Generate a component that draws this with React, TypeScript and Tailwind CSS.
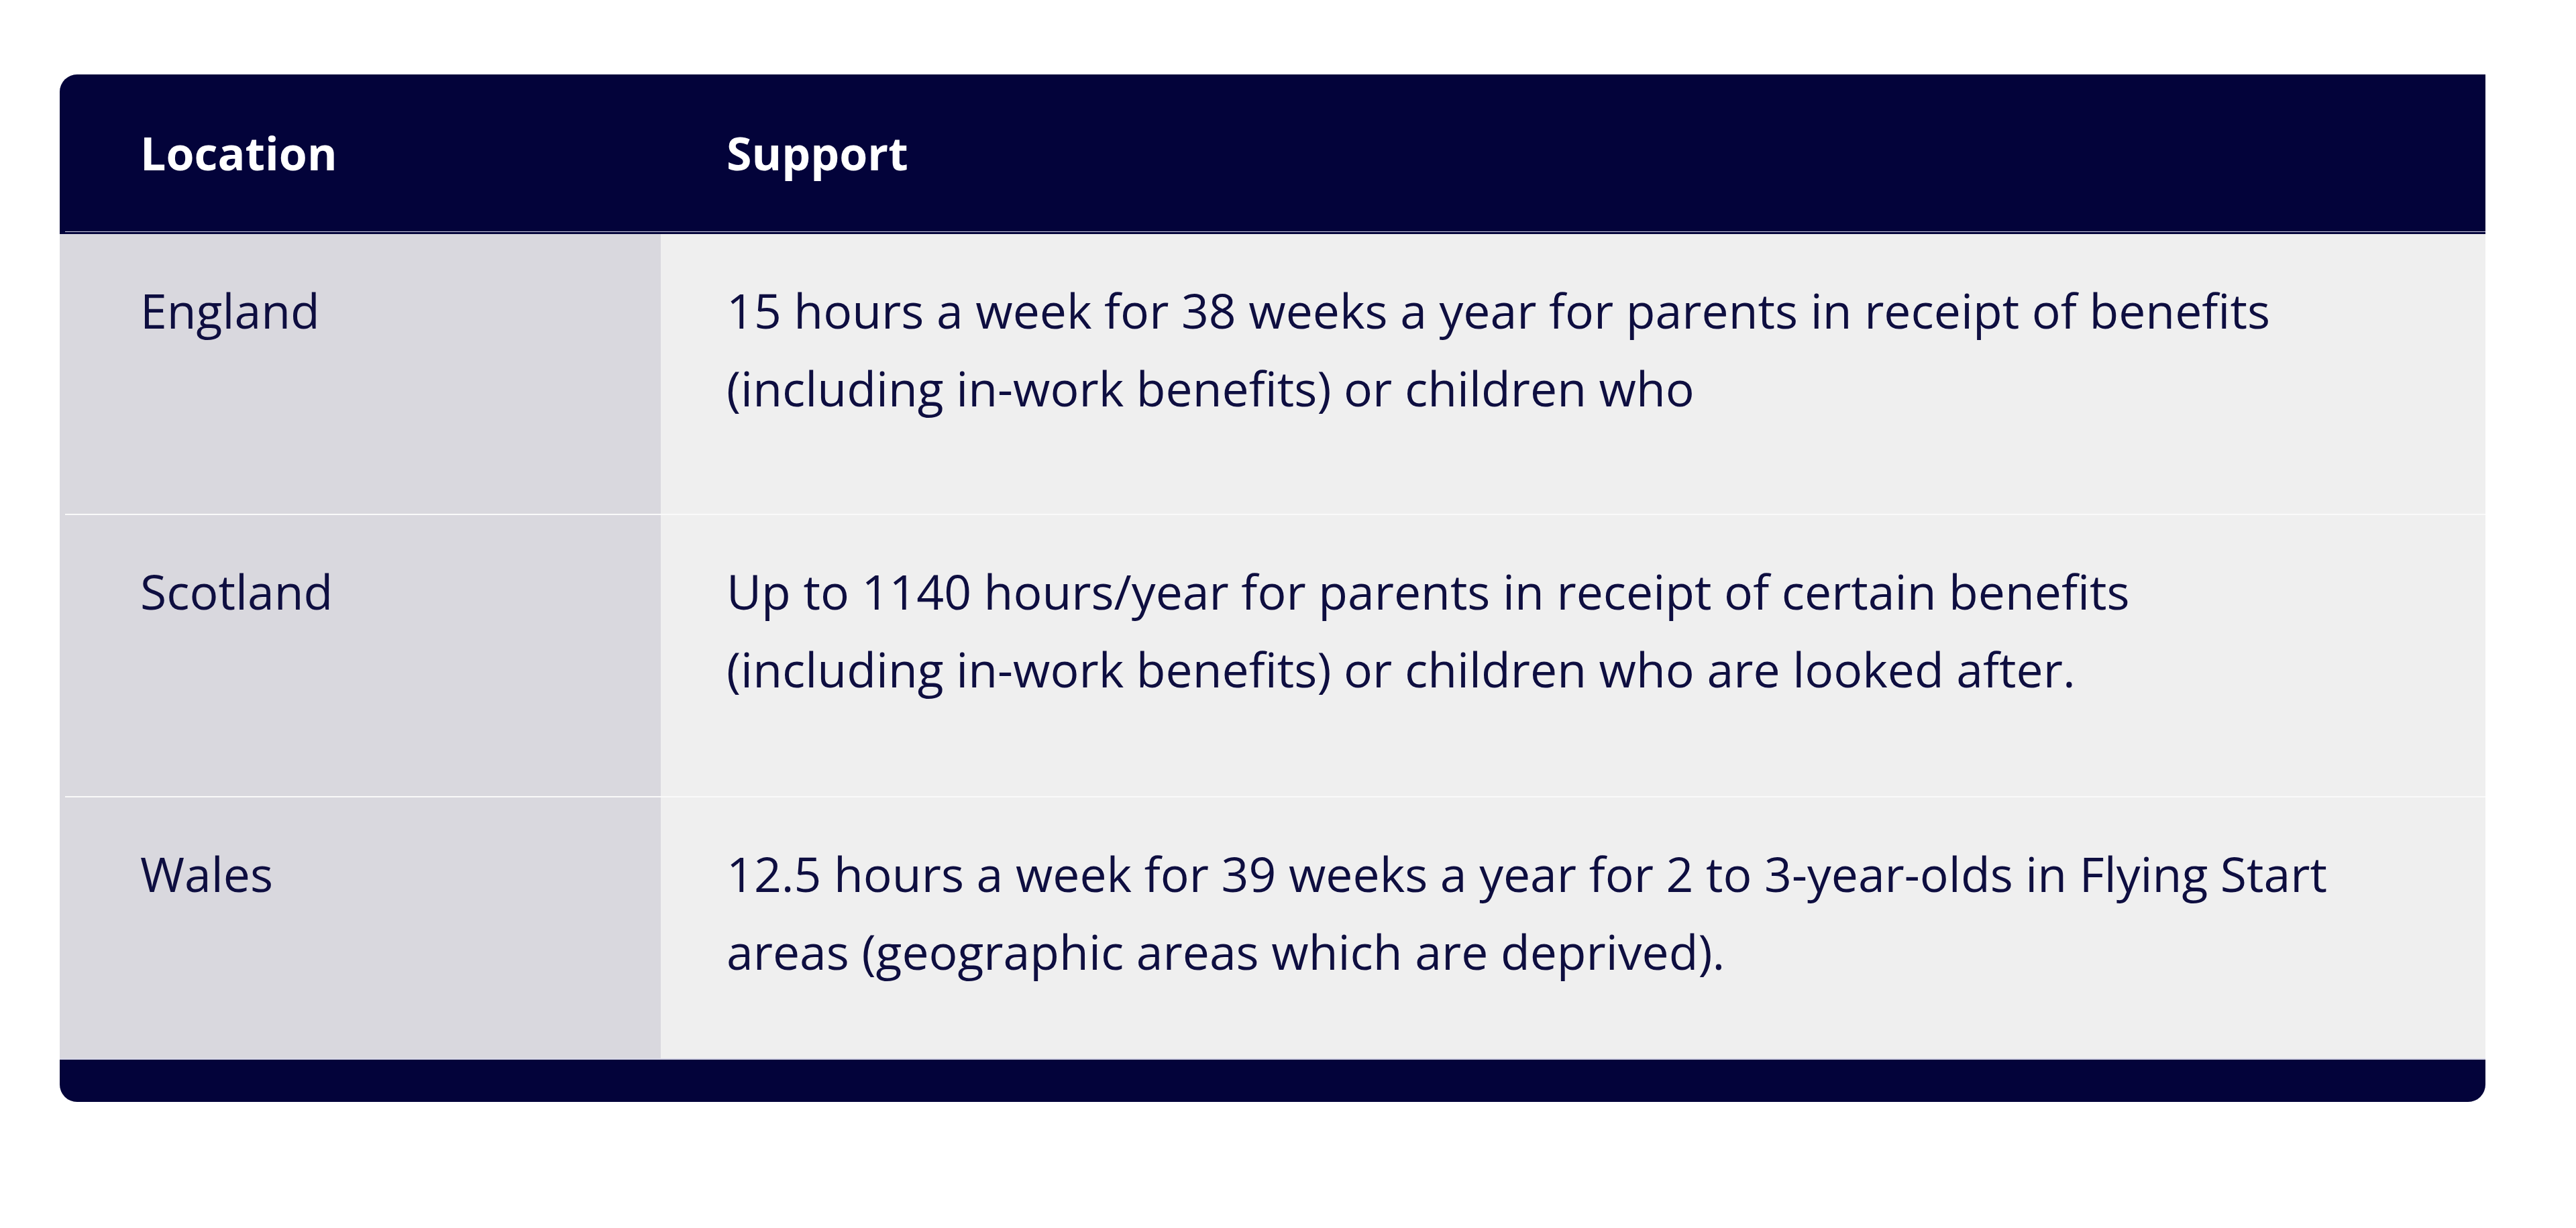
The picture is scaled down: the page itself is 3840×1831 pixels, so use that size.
const rows = [
  {
    location: "England",
    support:
      "15 hours a week for 38 weeks a year for parents in receipt of benefits (including in-work benefits) or children who",
    pad: "pb-[129px]",
  },
  {
    location: "Scotland",
    support:
      "Up to 1140 hours/year for parents in receipt of certain benefits (including in-work benefits) or children who are looked after.",
    pad: "pb-[131px]",
  },
  {
    location: "Wales",
    support:
      "12.5 hours a week for 39 weeks a year for 2 to 3-year-olds in Flying Start areas (geographic areas which are deprived).",
    pad: "pb-[101px]",
  },
];

export default function App() {
  return (
    <main
      className="min-h-screen bg-white pt-[111px] pl-[89px]"
      style={{ fontFamily: '"Open Sans", "Noto Sans", sans-serif' }}
    >
      <div className="w-[3616px] overflow-hidden rounded-tl-[26px] rounded-b-[26px] bg-[#d9d8de]">
        <div className="flex h-[234px] items-center bg-[#03033a] text-[68px] font-bold text-white">
          <div className="w-[896px] pl-[120px]">Location</div>
          <div className="pl-[98px]">Support</div>
        </div>
        <div className="bg-[#03033a] pb-[3px]">
          <div className="ml-2 h-px bg-[#d4d4e4]" />
        </div>

        {rows.map((row, i) => (
          <div key={row.location}>
            {i > 0 && <div className="ml-2 h-0.5 bg-[#fafafa]" />}
            <div className="flex text-[71.5px] leading-[116px] text-[#0e0e40]">
              <div className={`w-[896px] shrink-0 bg-[#d9d8de] pl-[120px] pt-[56px] ${row.pad}`}>
                {row.location}
              </div>
              <div className={`flex-1 bg-[#efefef] pl-[98px] pt-[56px] ${row.pad}`}>
                <p className="max-w-[2410px]">{row.support}</p>
              </div>
            </div>
          </div>
        ))}

        <div className="h-0.5 bg-[#d8d8e8]" />
        <div className="h-[63px] bg-[#03033a]" />
      </div>
    </main>
  );
}
